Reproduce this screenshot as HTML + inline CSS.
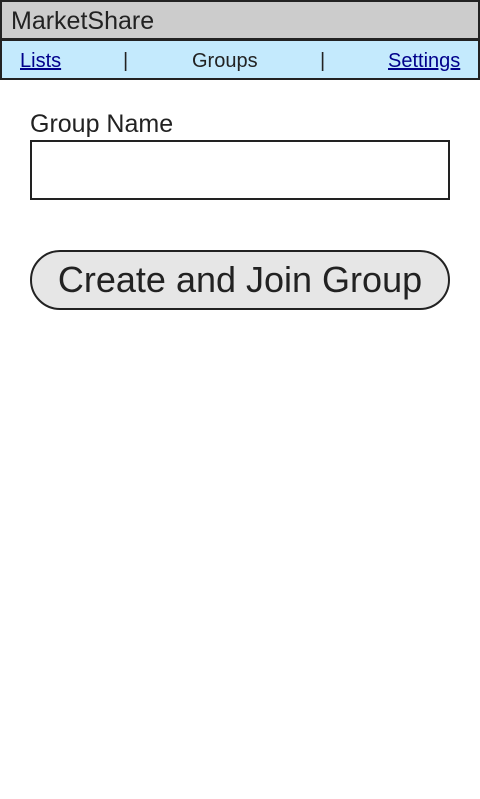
<!DOCTYPE html>
<html><head><style>
body{margin:0;width:480px;height:799px;background:#fff;font-family:"Liberation Sans",sans-serif;color:#222;position:relative;overflow:hidden}
.h{position:absolute;left:0;top:0;width:476px;height:36px;border:2px solid #222;background:#ccc;font-size:25px;line-height:38px}
.h span{position:absolute;left:9px;top:0}
.n{position:absolute;left:0;top:40px;width:476px;height:37px;border:2px solid #222;border-top:1px solid #222;background:#c4eafd;font-size:20px;line-height:40px}
.n span{position:absolute;top:0}
a{color:#00008b;text-decoration:underline}
.l{position:absolute;left:30px;top:110px;font-size:25px}
.i{position:absolute;left:30px;top:140px;width:416px;height:56px;border:2px solid #222}
.b{position:absolute;left:30px;top:250px;width:416px;height:56px;border:2px solid #222;border-radius:30px;background:#e6e6e6;font-size:36px;text-align:center;line-height:56px}
</style></head><body>
<div class="h"><span>MarketShare</span></div>
<div class="n"><span style="left:18px"><a>Lists</a></span><span style="left:121px">|</span><span style="left:190px">Groups</span><span style="left:318px">|</span><span style="left:386px"><a>Settings</a></span></div>
<div class="l">Group Name</div>
<div class="i"></div>
<div class="b">Create and Join Group</div>
</body></html>
